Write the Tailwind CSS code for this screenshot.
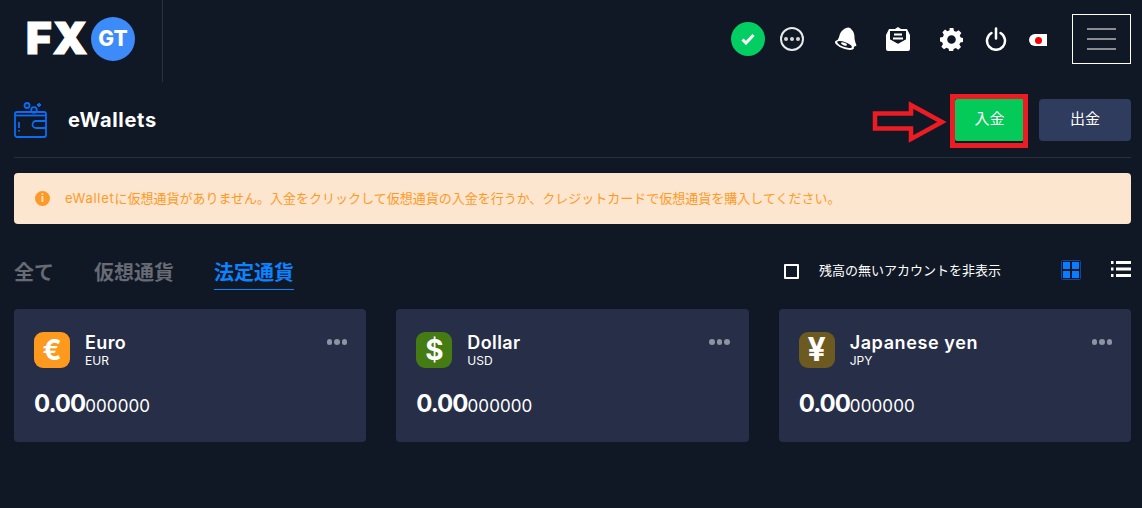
<!doctype html>
<html lang="ja"><head><meta charset="utf-8"><script src="https://cdn.jsdelivr.net/npm/@tailwindcss/browser@4"></script></head>
<body class="bg-[#101826] text-white font-['Inter','Noto_Sans_CJK_JP',sans-serif] overflow-hidden">
<div class="relative w-[1142px] h-[508px] overflow-hidden">
<header class="flex h-[82px]">
  <div class="w-[163px] h-full border-r border-[#2a303c] flex items-start pl-[26px] pt-[18px]">
    <span class="text-[44px] leading-[40px] font-black tracking-[1px] text-white w-[65px] [-webkit-text-stroke:1.2px_white]">FX</span>
    <span class="w-[44px] h-[44px] rounded-full bg-[#3d8bf8] flex items-center justify-center text-[21px] font-extrabold -mt-[1px]">GT</span>
  </div>
  <div class="ml-auto flex items-center pr-[11px] h-[78px]">
    <span class="w-[34px] h-[34px] rounded-full bg-[#03ce62] flex items-center justify-center">
      <svg width="14" height="12" viewBox="0 0 14 12" fill="none" stroke="#fff" stroke-width="3"><path d="M1.500 6.500l3.500 3.500 7.500-8"/></svg>
    </span>
    <span class="w-[24px] h-[24px] ml-[15px] rounded-full border-2 border-white/90 flex items-center justify-center gap-[2px]">
      <i class="w-[4px] h-[4px] rounded-full bg-[#d8d8d8]"></i><i class="w-[4px] h-[4px] rounded-full bg-[#d8d8d8]"></i><i class="w-[4px] h-[4px] rounded-full bg-[#d8d8d8]"></i>
    </span>
    <svg class="ml-[30px]" width="24" height="24" viewBox="0 0 24 24"><path d="M14 .5c2 0 3 1 3.500 2 2.500 2 3 5 3 8 0 3 1 5 2 8-4 3-9 2-13 0-4-1.500-7-3-8-4 2-.5 3-3 4-6 1-4 4-7 8.500-8z" fill="#fff"/><ellipse cx="10.500" cy="18" rx="10" ry="3.800" transform="rotate(20 10.500 18)" fill="#fff"/><ellipse cx="10.500" cy="17.500" rx="7.800" ry="2.500" transform="rotate(20 10.500 17.500)" fill="#101826"/><ellipse cx="10" cy="17" rx="3.200" ry="1.200" transform="rotate(20 10 17)" fill="#fff"/></svg>
    <svg class="ml-[28px]" width="24" height="24" viewBox="0 0 24 24"><path d="M12 0l3 2h6l3 6v14a2 2 0 0 1-2 2H2a2 2 0 0 1-2-2V8l3-6h6z" fill="#fff"/><path d="M4 4h16v9l-8 4-8-4z" fill="#101826"/><path d="M0 10l12 7 12-7v3l-12 6-12-6z" fill="#fff"/><path d="M8 6.500h8v2H8zM7 10.500h10v2H7z" fill="#fff"/></svg>
    <svg class="ml-[30px]" width="23" height="23" viewBox="0 0 24 24"><path fill="#fff" fill-rule="evenodd" d="M10 1h4l.6 3 2.300 1 2.600-1.700 2.800 2.800L20.600 8.700l1 2.300 2.400.5v4l-2.800.5-1 2.300 1.700 2.500-2.800 2.800-2.600-1.700-2.300 1-.6 2.600h-4l-.6-2.900-2.300-1-2.500 1.700-2.800-2.800 1.700-2.500-1-2.300L0 15v-4l3-.6 1-2.300L2.500 5.400l2.800-2.800L7.700 4.300 10 3.300z M12 8.500a4.500 4.500 0 1 0 0 9 4.500 4.500 0 0 0 0-9z" transform="translate(0 -1)"/></svg>
    <svg class="ml-[22px]" width="22" height="24" viewBox="0 0 22 24" fill="none" stroke="#fff" stroke-width="2.500" stroke-linecap="round"><path d="M11 1.500v10"/><path d="M6.500 6A9 9 0 1 0 15.500 6"/></svg>
    <span class="ml-[22px] w-[18px] h-[12px] bg-white rounded-l-full flex items-center justify-center mt-[2px]"><i class="w-[7px] h-[7px] rounded-full bg-[#f40000]"></i></span>
    <span class="ml-[25px] w-[59px] h-[50px] border border-white flex flex-col items-center justify-center gap-[8px]">
      <i class="w-[29px] h-[2px] bg-[#8b8d93]"></i><i class="w-[29px] h-[2px] bg-[#8b8d93]"></i><i class="w-[29px] h-[2px] bg-[#8b8d93]"></i>
    </span>
  </div>
</header>

<main class="ml-[14px] pr-[11px]">
  <section class="flex items-center h-[76px] border-b border-[#2a303c]">
    <svg width="33" height="36" viewBox="0 0 33 36" fill="none" stroke="#0b6cf5" stroke-width="1.800"><rect x="1" y="10" width="31" height="25" rx="2"/><path d="M1 13.500h31"/><circle cx="13" cy="3.500" r="2.500"/><circle cx="20" cy="8" r="2.800"/><path d="M25 1v4M23 3h4"/><path d="M5 20v6M5 28v1.500"/><path d="M32 19H22a3.500 3.500 0 0 0 0 7h10"/></svg>
    <h1 class="ml-[21px] text-[20px] font-bold tracking-[.7px]">eWallets</h1>
    <div class="ml-auto flex items-center gap-[15px]">
      <button class="w-[69px] h-[42px] bg-[#03ca59] rounded-[2px] text-[15px]">入金</button>
      <button class="w-[92px] h-[42px] bg-[#2f3c5e] rounded-[4px] text-[15px]">出金</button>
    </div>
  </section>

  <div class="mt-[15px] h-[51px] bg-[#fde6cf] rounded-[4px] flex items-center pl-[21px] text-[#fd9a27] text-[13px]">
    <span class="w-[15px] h-[15px] rounded-full bg-[#fd9a27] text-[#fde6cf] text-[11px] font-bold flex items-center justify-center">i</span>
    <span class="ml-[15px]"><span class="tracking-[.7px]">eWallet</span>に仮想通貨がありません。入金をクリックして仮想通貨の入金を行うか、クレジットカードで仮想通貨を購入してください。</span>
  </div>

  <div class="mt-[36px] h-[32px] flex items-start">
    <span class="text-[20px] leading-[27px] font-bold text-[#676b73]">全て</span>
    <span class="ml-[40px] text-[20px] leading-[27px] font-bold text-[#676b73]">仮想通貨</span>
    <span class="ml-[40px] text-[20px] leading-[27px] font-bold text-[#0a84ff] border-b border-[#0a84ff] h-[30px]">法定通貨</span>
    <span class="ml-auto flex items-center h-[20px]">
      <i class="w-[15px] h-[15px] border-2 border-white rounded-[1px] mt-[3px]"></i>
      <span class="ml-[20px] w-[242px] text-[13px] leading-[20px]">残高の無いアカウントを非表示</span>
    </span>
    <svg width="20" height="20" viewBox="0 0 20 20"><rect x=".5" y=".5" width="19" height="19" rx="1" fill="none" stroke="#0b47a8"/><path fill="#0a7cff" d="M2 2h7v7H2zM11 2h7v7h-7zM2 11h7v7H2zM11 11h7v7h-7z"/></svg>
    <svg width="20" height="18" viewBox="0 0 20 18" class="ml-[30px]" fill="#fff"><path d="M0 1h2.500v3H0zM5 1h15v3H5zM0 7.500h2.500v3H0zM5 7.500h15v3H5zM0 14h2.500v3H0zM5 14h15v3H5z"/></svg>
  </div>

  <div class="mt-[17px] grid grid-cols-3 gap-[30px]">
    <article class="relative h-[133px] bg-[#272e48] rounded-[4px] pt-[23px] pl-[20px]">
      <div class="flex">
        <span class="w-[36px] h-[36px] rounded-[9px] bg-[#fd9a1e] flex items-center justify-center text-[28px] font-bold">€</span>
        <div class="ml-[15px]"><div class="text-[18px] leading-[20px] mt-[1px] font-semibold tracking-[.4px]">Euro</div><div class="text-[12px] leading-[16px]">EUR</div></div>
      </div>
      <div class="mt-[21px] flex items-baseline"><span class="text-[24px] leading-[28px] font-bold tracking-[-1px]">0.00</span><span class="text-[17px] tracking-[.1px]">000000</span></div>
      <span class="absolute right-[19px] top-[30px] flex gap-[2px]"><i class="w-[5.500px] h-[5.500px] rounded-full bg-[#8e93a3]"></i><i class="w-[5.500px] h-[5.500px] rounded-full bg-[#8e93a3]"></i><i class="w-[5.500px] h-[5.500px] rounded-full bg-[#8e93a3]"></i></span>
    </article>
    <article class="relative h-[133px] bg-[#272e48] rounded-[4px] pt-[23px] pl-[20px]">
      <div class="flex">
        <span class="w-[36px] h-[36px] rounded-[9px] bg-[#457b13] flex items-center justify-center text-[28px] font-bold">$</span>
        <div class="ml-[15px]"><div class="text-[18px] leading-[20px] mt-[1px] font-semibold tracking-[.4px]">Dollar</div><div class="text-[12px] leading-[16px]">USD</div></div>
      </div>
      <div class="mt-[21px] flex items-baseline"><span class="text-[24px] leading-[28px] font-bold tracking-[-1px]">0.00</span><span class="text-[17px] tracking-[.1px]">000000</span></div>
      <span class="absolute right-[19px] top-[30px] flex gap-[2px]"><i class="w-[5.500px] h-[5.500px] rounded-full bg-[#8e93a3]"></i><i class="w-[5.500px] h-[5.500px] rounded-full bg-[#8e93a3]"></i><i class="w-[5.500px] h-[5.500px] rounded-full bg-[#8e93a3]"></i></span>
    </article>
    <article class="relative h-[133px] bg-[#272e48] rounded-[4px] pt-[23px] pl-[20px]">
      <div class="flex">
        <span class="w-[36px] h-[36px] rounded-[9px] bg-[#6d5a20] flex items-center justify-center text-[32px] font-bold">¥</span>
        <div class="ml-[15px]"><div class="text-[18px] leading-[20px] mt-[1px] font-semibold tracking-[.6px]">Japanese yen</div><div class="text-[12px] leading-[16px]">JPY</div></div>
      </div>
      <div class="mt-[21px] flex items-baseline"><span class="text-[24px] leading-[28px] font-bold tracking-[-1px]">0.00</span><span class="text-[17px] tracking-[.1px]">000000</span></div>
      <span class="absolute right-[19px] top-[30px] flex gap-[2px]"><i class="w-[5.500px] h-[5.500px] rounded-full bg-[#8e93a3]"></i><i class="w-[5.500px] h-[5.500px] rounded-full bg-[#8e93a3]"></i><i class="w-[5.500px] h-[5.500px] rounded-full bg-[#8e93a3]"></i></span>
    </article>
  </div>
</main>

<svg class="absolute left-[870px] top-[90px]" width="85" height="60" viewBox="870 90 85 60" fill="none" stroke="#ed1c24" stroke-width="4.500"><path d="M875 113.500h36v-8.500l31 17-31 17v-10.500h-36z"/></svg>
<div class="absolute left-[950px] top-[94px] w-[78px] h-[54px] border-[5px] border-[#ed1c24]"></div>
</div>
</body></html>
